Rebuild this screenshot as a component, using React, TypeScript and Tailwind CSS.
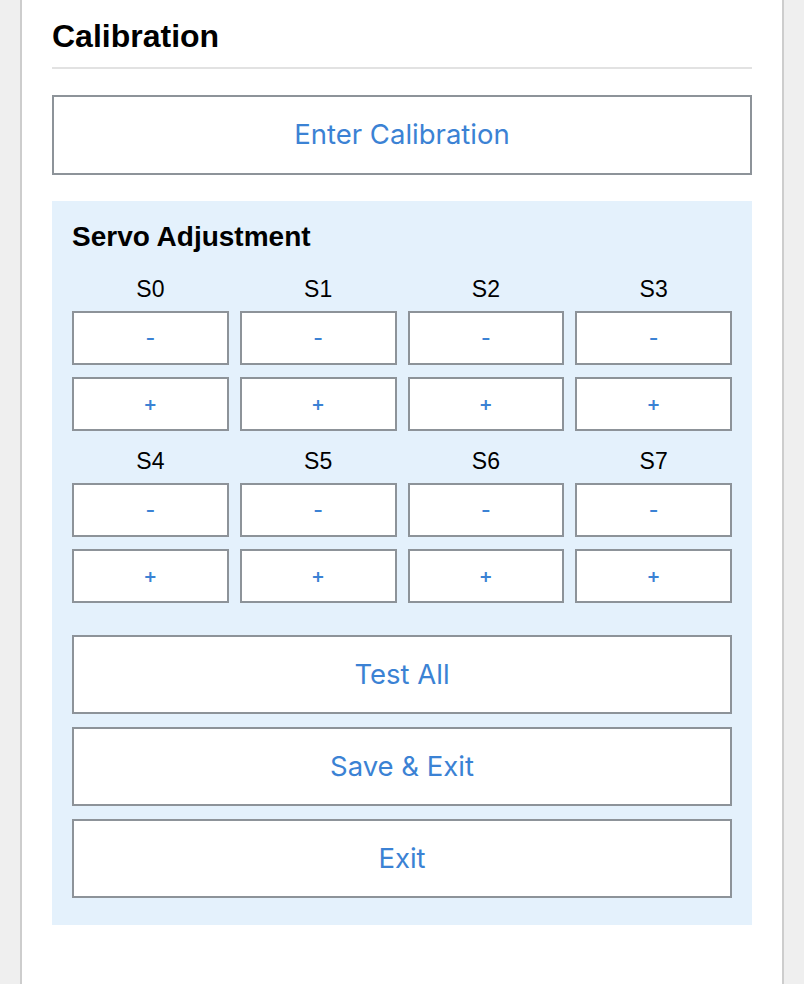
import React from "react";

const blue = "text-[#3b82d4]";

function BigButton({ label }: { label: string }) {
  return (
    <button
      type="button"
      className={`flex h-[79px] w-full items-center justify-center border-2 border-[#8d9399] bg-white text-[27.5px] ${blue}`}
      style={{ fontFamily: "Inter, 'Open Sans', sans-serif" }}
    >
      {label}
    </button>
  );
}

function SmallButton({ label }: { label: string }) {
  return (
    <button
      type="button"
      className={`flex h-[54px] w-full items-center justify-center border-2 border-[#8d9399] bg-white text-[21px] font-medium ${blue}`}
      style={{ fontFamily: "Inter, 'Open Sans', sans-serif" }}
    >
      {label}
    </button>
  );
}

function ServoGroup({ ids, first }: { ids: number[]; first?: boolean }) {
  return (
    <div className={first ? "mt-[24px]" : "mt-[18px]"}>
      <div className="grid grid-cols-4 gap-x-[11px]">
        {ids.map((id) => (
          <div key={id} className="h-[24px] text-center text-[23px] leading-[24px] text-black">
            S{id}
          </div>
        ))}
      </div>
      <div className="mt-[10px] grid grid-cols-4 gap-x-[11px] gap-y-[12px]">
        {ids.map((id) => (
          <SmallButton key={`m${id}`} label="-" />
        ))}
        {ids.map((id) => (
          <SmallButton key={`p${id}`} label="+" />
        ))}
      </div>
    </div>
  );
}

export default function App() {
  return (
    <div
      className="min-h-[984px] w-full bg-[#efefef]"
      style={{ fontFamily: "'Liberation Sans', Arial, sans-serif" }}
    >
      <div className="ml-[20px] min-h-[984px] w-[764px] border-x-2 border-[#cdcdcd] bg-white px-[30px]">
        <h1 className="pt-[17px] text-[32px] font-bold leading-[38px] text-black">Calibration</h1>
        <div className="mt-[12px] h-[2px] w-full bg-[#e2e2e2]" />

        <div className="mt-[26px]">
          <button
            type="button"
            className={`flex h-[80px] w-full items-center justify-center border-2 border-[#8d9399] bg-white text-[27.5px] ${blue}`}
            style={{ fontFamily: "Inter, 'Open Sans', sans-serif" }}
          >
            Enter Calibration
          </button>
        </div>

        <div className="mt-[26px] bg-[#e4f1fc] px-[20px] pb-[27px] pt-[20px]">
          <h2 className="text-[28px] font-bold leading-[32px] text-black">Servo Adjustment</h2>
          <ServoGroup ids={[0, 1, 2, 3]} first />
          <ServoGroup ids={[4, 5, 6, 7]} />
          <div className="mt-[32px] flex flex-col gap-[13px]">
            <BigButton label="Test All" />
            <BigButton label="Save & Exit" />
            <BigButton label="Exit" />
          </div>
        </div>
      </div>
    </div>
  );
}
